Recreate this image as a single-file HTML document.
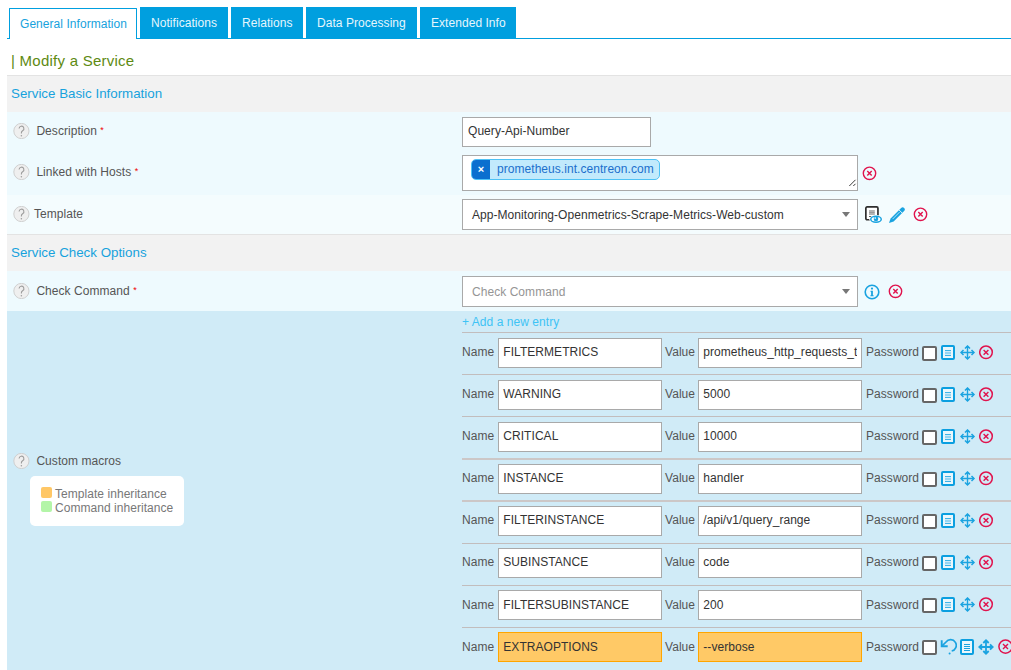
<!DOCTYPE html>
<html><head><meta charset="utf-8">
<style>
html,body{margin:0;padding:0;background:#fff;width:1011px;height:670px;overflow:hidden;}
body{font-family:"Liberation Sans",sans-serif;font-size:12px;color:#555;position:relative;letter-spacing:0.05px;}
.a{position:absolute;}
.t{position:absolute;white-space:nowrap;line-height:14px;height:14px;}
.tab{position:absolute;top:7px;height:31px;background:#009fdf;color:#e6f6fd;}
.tab span{position:absolute;top:9px;line-height:14px;white-space:nowrap;}
.hdr{position:absolute;left:7px;width:1004px;background:#f2f2f2;border-top:1px solid #e3e3e3;border-bottom:1px solid #e3e3e3;}
.hdr span{position:absolute;left:4px;font-size:13.33px;letter-spacing:0;color:#17a2dd;line-height:15px;white-space:nowrap;}
.help{position:absolute;width:15px;height:14px;border:1px solid #d2d2d2;border-radius:50%;background:#efefef;color:#a6a6a6;font-size:13px;line-height:15px;text-align:center;}
.req{color:#e00;font-size:9px;position:relative;top:-2px;}
.inp{position:absolute;background:#fff;border:1px solid #a9a9a9;box-sizing:border-box;}
.inp span{position:absolute;left:4.3px;line-height:14px;white-space:nowrap;color:#333;}
.sep{position:absolute;left:462px;width:549px;height:1px;background:#c2bdbd;}
.orange{background:#ffc966;border-color:#ffa500;}
</style></head><body>

<!-- tabs -->
<div class="a" style="left:7px;top:38px;width:1004px;height:1px;background:#009fdf"></div>
<div class="a" style="left:9px;top:8px;width:126px;height:30px;border:1px solid #009fdf;border-bottom:none;border-radius:1px 1px 0 0;background:#fff;"></div>
<div class="t" style="left:20px;top:17px;color:#17a2dd">General Information</div>
<div class="tab" style="left:140px;width:88px"><span style="left:11px">Notifications</span></div>
<div class="tab" style="left:231px;width:72px"><span style="left:11px">Relations</span></div>
<div class="tab" style="left:306px;width:111px"><span style="left:11px">Data Processing</span></div>
<div class="tab" style="left:420px;width:96px"><span style="left:11px">Extended Info</span></div>

<div class="t" style="left:11px;top:52px;font-size:15px;letter-spacing:0.25px;line-height:18px;height:18px;color:#5e8a12">| Modify a Service</div>

<!-- Section 1 -->
<div class="hdr" style="top:75px;height:36px"><span style="top:10px">Service Basic Information</span></div>
<div class="a" style="left:7px;top:112px;width:1004px;height:83px;background:#eefafe"></div>
<div class="a" style="left:7px;top:195px;width:1004px;height:39px;background:#f4fcfe"></div>

<svg class="a" style="left:13px;top:123px" width="17" height="16" viewBox="0 0 17 16"><circle cx="8.4" cy="8" r="7.6" fill="#efefef" stroke="#cfcfcf" stroke-width="1"/><path d="M6.1 5.6A2.4 2.4 0 1 1 9.6 7.7Q8.4 8.4 8.4 9.8V10.6" fill="none" stroke="#9c9c9c" stroke-width="1.1"/><circle cx="8.4" cy="12.7" r="0.75" fill="#9c9c9c"/></svg>
<div class="t" style="left:36.4px;top:124px;color:#555">Description <span class="req">*</span></div>
<div class="inp" style="left:462px;top:117px;width:189px;height:30px"><span style="top:6px;left:5px">Query-Api-Number</span></div>

<svg class="a" style="left:13px;top:164px" width="17" height="16" viewBox="0 0 17 16"><circle cx="8.4" cy="8" r="7.6" fill="#efefef" stroke="#cfcfcf" stroke-width="1"/><path d="M6.1 5.6A2.4 2.4 0 1 1 9.6 7.7Q8.4 8.4 8.4 9.8V10.6" fill="none" stroke="#9c9c9c" stroke-width="1.1"/><circle cx="8.4" cy="12.7" r="0.75" fill="#9c9c9c"/></svg>
<div class="t" style="left:36.4px;top:165px;color:#555">Linked with Hosts <span class="req">*</span></div>
<div class="inp" style="left:462px;top:155px;width:396px;height:36px"></div>
<div class="a" style="left:471px;top:159px;width:187px;height:19px;border:1px solid #4ec2f5;border-radius:5px;background:#c2eafc;overflow:hidden">
  <div class="a" style="left:0;top:0;width:18px;height:19px;background:#0b6fcf;color:#fff;font-size:11px;line-height:19px;text-align:center;font-weight:bold">×</div>
  <div class="t" style="left:25px;top:2px;color:#1b6fcc">prometheus.int.centreon.com</div>
</div>

<svg class="a" style="left:13px;top:206px" width="17" height="16" viewBox="0 0 17 16"><circle cx="8.4" cy="8" r="7.6" fill="#efefef" stroke="#cfcfcf" stroke-width="1"/><path d="M6.1 5.6A2.4 2.4 0 1 1 9.6 7.7Q8.4 8.4 8.4 9.8V10.6" fill="none" stroke="#9c9c9c" stroke-width="1.1"/><circle cx="8.4" cy="12.7" r="0.75" fill="#9c9c9c"/></svg>
<div class="t" style="left:34px;top:207px;color:#555">Template</div>
<div class="inp" style="left:462px;top:199px;width:396px;height:31px"><span style="left:9px;top:8px">App-Monitoring-Openmetrics-Scrape-Metrics-Web-custom</span></div>

<!-- Section 2 -->
<div class="hdr" style="top:234px;height:36px"><span style="top:10px">Service Check Options</span></div>
<div class="a" style="left:7px;top:271px;width:1004px;height:40px;background:#eefafe"></div>
<svg class="a" style="left:13px;top:283px" width="17" height="16" viewBox="0 0 17 16"><circle cx="8.4" cy="8" r="7.6" fill="#efefef" stroke="#cfcfcf" stroke-width="1"/><path d="M6.1 5.6A2.4 2.4 0 1 1 9.6 7.7Q8.4 8.4 8.4 9.8V10.6" fill="none" stroke="#9c9c9c" stroke-width="1.1"/><circle cx="8.4" cy="12.7" r="0.75" fill="#9c9c9c"/></svg>
<div class="t" style="left:36.4px;top:284px;color:#555">Check Command <span class="req">*</span></div>
<div class="inp" style="left:462px;top:276px;width:396px;height:31px"><span style="left:9px;top:8px;color:#959595">Check Command</span></div>

<div class="a" style="left:7px;top:311px;width:1004px;height:359px;background:#d0ebf7"></div>
<svg class="a" style="left:13px;top:453px" width="17" height="16" viewBox="0 0 17 16"><circle cx="8.4" cy="8" r="7.6" fill="#efefef" stroke="#cfcfcf" stroke-width="1"/><path d="M6.1 5.6A2.4 2.4 0 1 1 9.6 7.7Q8.4 8.4 8.4 9.8V10.6" fill="none" stroke="#9c9c9c" stroke-width="1.1"/><circle cx="8.4" cy="12.7" r="0.75" fill="#9c9c9c"/></svg>
<div class="t" style="left:36.4px;top:454px;color:#555">Custom macros</div>
<div class="a" style="left:30px;top:476px;width:154px;height:50px;background:#fff;border-radius:5px"></div>
<div class="a" style="left:41px;top:487px;width:11px;height:11px;background:#ffc766;border-radius:2px"></div>
<div class="a" style="left:41px;top:501px;width:11px;height:11px;background:#b3f5a8;border-radius:2px"></div>
<div class="t" style="left:55px;top:487px;color:#777">Template inheritance</div>
<div class="t" style="left:55px;top:501px;color:#777">Command inheritance</div>

<div class="t" style="left:462px;top:315px;color:#3ec3f5">+ Add a new entry</div>

<svg class="a" style="left:862px;top:166px" width="15" height="15" viewBox="0 0 15 15"><circle cx="7.5" cy="7.3" r="6.2" fill="none" stroke="#e0134d" stroke-width="1.4"/><path d="M5.3 5.1l4.4 4.4M9.7 5.1l-4.4 4.4" stroke="#e0134d" stroke-width="1.4"/></svg>
<svg class="a" style="left:842px;top:212px" width="8" height="5" viewBox="0 0 8 5"><path d="M0 0h8L4 5z" fill="#777"/></svg>
<svg class="a" style="left:845px;top:177px" width="12" height="12" viewBox="0 0 12 12"><path d="M4.3 9L10.5 2.8M8.3 9L10.5 6.8" stroke="#3a3a3a" stroke-width="1"/></svg>
<svg class="a" style="left:864px;top:205px" width="20" height="19" viewBox="0 0 20 19"><rect x="1.85" y="1.85" width="12.1" height="12.9" rx="1.3" fill="#fff" stroke="#2e2e2e" stroke-width="1.7"/><path d="M5 6h5.8M5 7.6h5.8M5 9.2h5.8" stroke="#9a9a9a" stroke-width="1.3"/><path d="M5 11.5h3.5" stroke="#444" stroke-width="0.9"/><ellipse cx="12" cy="14.3" rx="6.6" ry="4.3" fill="#fff"/><ellipse cx="12" cy="14.3" rx="5.25" ry="2.95" fill="#fff" stroke="#1aa3e0" stroke-width="1.5"/><circle cx="12" cy="13.9" r="2.3" fill="#1aa3e0"/><circle cx="11.2" cy="13.1" r="0.8" fill="#fff"/></svg>
<svg class="a" style="left:888px;top:207px" width="18" height="17" viewBox="0 0 18 17"><path d="M1 16L2.6 11.4L13.1 0.9A2.1 2.1 0 0 1 16.1 3.9L5.6 14.4z" fill="#1aa3e0"/><path d="M4.6 12.1L11.6 5.1" stroke="#bde5f7" stroke-width="0.9"/><path d="M11 2.9l3.1 3.1" stroke="#f5fbfe" stroke-width="0.9"/></svg>
<svg class="a" style="left:913px;top:207px" width="15" height="15" viewBox="0 0 15 15"><circle cx="7.5" cy="7.3" r="6.2" fill="none" stroke="#e0134d" stroke-width="1.4"/><path d="M5.3 5.1l4.4 4.4M9.7 5.1l-4.4 4.4" stroke="#e0134d" stroke-width="1.4"/></svg>
<svg class="a" style="left:842px;top:289px" width="8" height="5" viewBox="0 0 8 5"><path d="M0 0h8L4 5z" fill="#777"/></svg>
<svg class="a" style="left:864px;top:284px" width="16" height="16" viewBox="0 0 16 16"><circle cx="8" cy="8" r="6.8" fill="none" stroke="#1aa3e0" stroke-width="1.6"/><path d="M6.6 6.8H8.9V11.2H9.6V12.3H6.4V11.2H7.1V7.9H6.6z" fill="#1aa3e0"/><circle cx="8" cy="4.6" r="1.1" fill="#1aa3e0"/></svg>
<svg class="a" style="left:888px;top:284px" width="15" height="15" viewBox="0 0 15 15"><circle cx="7.5" cy="7.3" r="6.2" fill="none" stroke="#e0134d" stroke-width="1.4"/><path d="M5.3 5.1l4.4 4.4M9.7 5.1l-4.4 4.4" stroke="#e0134d" stroke-width="1.4"/></svg>
<div id="macros">
<div class="sep" style="top:332px"></div>
<div class="t" style="left:462px;top:345px">Name</div>
<div class="inp" style="left:498px;top:338px;width:164px;height:30px"><span style="top:6px">FILTERMETRICS</span></div>
<div class="t" style="left:665px;top:345px">Value</div>
<div class="inp" style="left:698px;top:338px;width:164px;height:30px;overflow:hidden"><span style="top:6px;width:154px;overflow:hidden">prometheus_http_requests_t</span></div>
<div class="t" style="left:866px;top:345px">Password</div>
<svg class="a" style="left:922px;top:346px" width="15" height="15" viewBox="0 0 15 15"><rect x="1" y="1" width="13" height="13" rx="1" fill="#fff" stroke="#666" stroke-width="2"/></svg>
<svg class="a" style="left:941px;top:345px" width="14" height="15" viewBox="0 0 14 15"><rect x="1" y="1" width="12" height="13" rx="1" fill="#eaf7fc" stroke="#0b9fe0" stroke-width="2"/><path d="M4 5.5h6M4 10.5h6" stroke="#3fb2e6" stroke-width="1.1"/><path d="M4 7.2h6M4 8.8h6" stroke="#7ccbef" stroke-width="1.1"/></svg>
<svg class="a" style="left:960px;top:345px" width="16" height="16" viewBox="0 0 16 16"><path d="M7.5 1.2V14M1.2 7.5H14" stroke="#1aa3e0" stroke-width="1.4" fill="none"/><path d="M5 3.5L7.5 1L10 3.5M5 11.5L7.5 14L10 11.5M3.5 5L1 7.5L3.5 10M11.5 5L14 7.5L11.5 10" stroke="#1aa3e0" stroke-width="1.5" fill="none"/></svg>
<svg class="a" style="left:979px;top:345px" width="15" height="15" viewBox="0 0 15 15"><circle cx="7" cy="7.3" r="6.3" fill="none" stroke="#e0134d" stroke-width="1.5"/><path d="M4.6 4.9l4.8 4.8M9.4 4.9l-4.8 4.8" stroke="#e0134d" stroke-width="1.4"/></svg>
<div class="sep" style="top:374px"></div>
<div class="t" style="left:462px;top:387px">Name</div>
<div class="inp" style="left:498px;top:380px;width:164px;height:30px"><span style="top:6px">WARNING</span></div>
<div class="t" style="left:665px;top:387px">Value</div>
<div class="inp" style="left:698px;top:380px;width:164px;height:30px;overflow:hidden"><span style="top:6px;width:154px;overflow:hidden">5000</span></div>
<div class="t" style="left:866px;top:387px">Password</div>
<svg class="a" style="left:922px;top:388px" width="15" height="15" viewBox="0 0 15 15"><rect x="1" y="1" width="13" height="13" rx="1" fill="#fff" stroke="#666" stroke-width="2"/></svg>
<svg class="a" style="left:941px;top:387px" width="14" height="15" viewBox="0 0 14 15"><rect x="1" y="1" width="12" height="13" rx="1" fill="#eaf7fc" stroke="#0b9fe0" stroke-width="2"/><path d="M4 5.5h6M4 10.5h6" stroke="#3fb2e6" stroke-width="1.1"/><path d="M4 7.2h6M4 8.8h6" stroke="#7ccbef" stroke-width="1.1"/></svg>
<svg class="a" style="left:960px;top:387px" width="16" height="16" viewBox="0 0 16 16"><path d="M7.5 1.2V14M1.2 7.5H14" stroke="#1aa3e0" stroke-width="1.4" fill="none"/><path d="M5 3.5L7.5 1L10 3.5M5 11.5L7.5 14L10 11.5M3.5 5L1 7.5L3.5 10M11.5 5L14 7.5L11.5 10" stroke="#1aa3e0" stroke-width="1.5" fill="none"/></svg>
<svg class="a" style="left:979px;top:387px" width="15" height="15" viewBox="0 0 15 15"><circle cx="7" cy="7.3" r="6.3" fill="none" stroke="#e0134d" stroke-width="1.5"/><path d="M4.6 4.9l4.8 4.8M9.4 4.9l-4.8 4.8" stroke="#e0134d" stroke-width="1.4"/></svg>
<div class="sep" style="top:416px"></div>
<div class="t" style="left:462px;top:429px">Name</div>
<div class="inp" style="left:498px;top:422px;width:164px;height:30px"><span style="top:6px">CRITICAL</span></div>
<div class="t" style="left:665px;top:429px">Value</div>
<div class="inp" style="left:698px;top:422px;width:164px;height:30px;overflow:hidden"><span style="top:6px;width:154px;overflow:hidden">10000</span></div>
<div class="t" style="left:866px;top:429px">Password</div>
<svg class="a" style="left:922px;top:430px" width="15" height="15" viewBox="0 0 15 15"><rect x="1" y="1" width="13" height="13" rx="1" fill="#fff" stroke="#666" stroke-width="2"/></svg>
<svg class="a" style="left:941px;top:429px" width="14" height="15" viewBox="0 0 14 15"><rect x="1" y="1" width="12" height="13" rx="1" fill="#eaf7fc" stroke="#0b9fe0" stroke-width="2"/><path d="M4 5.5h6M4 10.5h6" stroke="#3fb2e6" stroke-width="1.1"/><path d="M4 7.2h6M4 8.8h6" stroke="#7ccbef" stroke-width="1.1"/></svg>
<svg class="a" style="left:960px;top:429px" width="16" height="16" viewBox="0 0 16 16"><path d="M7.5 1.2V14M1.2 7.5H14" stroke="#1aa3e0" stroke-width="1.4" fill="none"/><path d="M5 3.5L7.5 1L10 3.5M5 11.5L7.5 14L10 11.5M3.5 5L1 7.5L3.5 10M11.5 5L14 7.5L11.5 10" stroke="#1aa3e0" stroke-width="1.5" fill="none"/></svg>
<svg class="a" style="left:979px;top:429px" width="15" height="15" viewBox="0 0 15 15"><circle cx="7" cy="7.3" r="6.3" fill="none" stroke="#e0134d" stroke-width="1.5"/><path d="M4.6 4.9l4.8 4.8M9.4 4.9l-4.8 4.8" stroke="#e0134d" stroke-width="1.4"/></svg>
<div class="sep" style="top:458px;height:2px;background:#ccc7c7"></div>
<div class="t" style="left:462px;top:471px">Name</div>
<div class="inp" style="left:498px;top:464px;width:164px;height:30px"><span style="top:6px">INSTANCE</span></div>
<div class="t" style="left:665px;top:471px">Value</div>
<div class="inp" style="left:698px;top:464px;width:164px;height:30px;overflow:hidden"><span style="top:6px;width:154px;overflow:hidden">handler</span></div>
<div class="t" style="left:866px;top:471px">Password</div>
<svg class="a" style="left:922px;top:472px" width="15" height="15" viewBox="0 0 15 15"><rect x="1" y="1" width="13" height="13" rx="1" fill="#fff" stroke="#666" stroke-width="2"/></svg>
<svg class="a" style="left:941px;top:471px" width="14" height="15" viewBox="0 0 14 15"><rect x="1" y="1" width="12" height="13" rx="1" fill="#eaf7fc" stroke="#0b9fe0" stroke-width="2"/><path d="M4 5.5h6M4 10.5h6" stroke="#3fb2e6" stroke-width="1.1"/><path d="M4 7.2h6M4 8.8h6" stroke="#7ccbef" stroke-width="1.1"/></svg>
<svg class="a" style="left:960px;top:471px" width="16" height="16" viewBox="0 0 16 16"><path d="M7.5 1.2V14M1.2 7.5H14" stroke="#1aa3e0" stroke-width="1.4" fill="none"/><path d="M5 3.5L7.5 1L10 3.5M5 11.5L7.5 14L10 11.5M3.5 5L1 7.5L3.5 10M11.5 5L14 7.5L11.5 10" stroke="#1aa3e0" stroke-width="1.5" fill="none"/></svg>
<svg class="a" style="left:979px;top:471px" width="15" height="15" viewBox="0 0 15 15"><circle cx="7" cy="7.3" r="6.3" fill="none" stroke="#e0134d" stroke-width="1.5"/><path d="M4.6 4.9l4.8 4.8M9.4 4.9l-4.8 4.8" stroke="#e0134d" stroke-width="1.4"/></svg>
<div class="sep" style="top:500px;height:2px;background:#ccc7c7"></div>
<div class="t" style="left:462px;top:513px">Name</div>
<div class="inp" style="left:498px;top:506px;width:164px;height:30px"><span style="top:6px">FILTERINSTANCE</span></div>
<div class="t" style="left:665px;top:513px">Value</div>
<div class="inp" style="left:698px;top:506px;width:164px;height:30px;overflow:hidden"><span style="top:6px;width:154px;overflow:hidden">/api/v1/query_range</span></div>
<div class="t" style="left:866px;top:513px">Password</div>
<svg class="a" style="left:922px;top:514px" width="15" height="15" viewBox="0 0 15 15"><rect x="1" y="1" width="13" height="13" rx="1" fill="#fff" stroke="#666" stroke-width="2"/></svg>
<svg class="a" style="left:941px;top:513px" width="14" height="15" viewBox="0 0 14 15"><rect x="1" y="1" width="12" height="13" rx="1" fill="#eaf7fc" stroke="#0b9fe0" stroke-width="2"/><path d="M4 5.5h6M4 10.5h6" stroke="#3fb2e6" stroke-width="1.1"/><path d="M4 7.2h6M4 8.8h6" stroke="#7ccbef" stroke-width="1.1"/></svg>
<svg class="a" style="left:960px;top:513px" width="16" height="16" viewBox="0 0 16 16"><path d="M7.5 1.2V14M1.2 7.5H14" stroke="#1aa3e0" stroke-width="1.4" fill="none"/><path d="M5 3.5L7.5 1L10 3.5M5 11.5L7.5 14L10 11.5M3.5 5L1 7.5L3.5 10M11.5 5L14 7.5L11.5 10" stroke="#1aa3e0" stroke-width="1.5" fill="none"/></svg>
<svg class="a" style="left:979px;top:513px" width="15" height="15" viewBox="0 0 15 15"><circle cx="7" cy="7.3" r="6.3" fill="none" stroke="#e0134d" stroke-width="1.5"/><path d="M4.6 4.9l4.8 4.8M9.4 4.9l-4.8 4.8" stroke="#e0134d" stroke-width="1.4"/></svg>
<div class="sep" style="top:543px"></div>
<div class="t" style="left:462px;top:555px">Name</div>
<div class="inp" style="left:498px;top:548px;width:164px;height:30px"><span style="top:6px">SUBINSTANCE</span></div>
<div class="t" style="left:665px;top:555px">Value</div>
<div class="inp" style="left:698px;top:548px;width:164px;height:30px;overflow:hidden"><span style="top:6px;width:154px;overflow:hidden">code</span></div>
<div class="t" style="left:866px;top:555px">Password</div>
<svg class="a" style="left:922px;top:556px" width="15" height="15" viewBox="0 0 15 15"><rect x="1" y="1" width="13" height="13" rx="1" fill="#fff" stroke="#666" stroke-width="2"/></svg>
<svg class="a" style="left:941px;top:555px" width="14" height="15" viewBox="0 0 14 15"><rect x="1" y="1" width="12" height="13" rx="1" fill="#eaf7fc" stroke="#0b9fe0" stroke-width="2"/><path d="M4 5.5h6M4 10.5h6" stroke="#3fb2e6" stroke-width="1.1"/><path d="M4 7.2h6M4 8.8h6" stroke="#7ccbef" stroke-width="1.1"/></svg>
<svg class="a" style="left:960px;top:555px" width="16" height="16" viewBox="0 0 16 16"><path d="M7.5 1.2V14M1.2 7.5H14" stroke="#1aa3e0" stroke-width="1.4" fill="none"/><path d="M5 3.5L7.5 1L10 3.5M5 11.5L7.5 14L10 11.5M3.5 5L1 7.5L3.5 10M11.5 5L14 7.5L11.5 10" stroke="#1aa3e0" stroke-width="1.5" fill="none"/></svg>
<svg class="a" style="left:979px;top:555px" width="15" height="15" viewBox="0 0 15 15"><circle cx="7" cy="7.3" r="6.3" fill="none" stroke="#e0134d" stroke-width="1.5"/><path d="M4.6 4.9l4.8 4.8M9.4 4.9l-4.8 4.8" stroke="#e0134d" stroke-width="1.4"/></svg>
<div class="sep" style="top:585px"></div>
<div class="t" style="left:462px;top:598px">Name</div>
<div class="inp" style="left:498px;top:590px;width:164px;height:30px"><span style="top:7px">FILTERSUBINSTANCE</span></div>
<div class="t" style="left:665px;top:598px">Value</div>
<div class="inp" style="left:698px;top:590px;width:164px;height:30px;overflow:hidden"><span style="top:7px;width:154px;overflow:hidden">200</span></div>
<div class="t" style="left:866px;top:598px">Password</div>
<svg class="a" style="left:922px;top:598px" width="15" height="15" viewBox="0 0 15 15"><rect x="1" y="1" width="13" height="13" rx="1" fill="#fff" stroke="#666" stroke-width="2"/></svg>
<svg class="a" style="left:941px;top:597px" width="14" height="15" viewBox="0 0 14 15"><rect x="1" y="1" width="12" height="13" rx="1" fill="#eaf7fc" stroke="#0b9fe0" stroke-width="2"/><path d="M4 5.5h6M4 10.5h6" stroke="#3fb2e6" stroke-width="1.1"/><path d="M4 7.2h6M4 8.8h6" stroke="#7ccbef" stroke-width="1.1"/></svg>
<svg class="a" style="left:960px;top:597px" width="16" height="16" viewBox="0 0 16 16"><path d="M7.5 1.2V14M1.2 7.5H14" stroke="#1aa3e0" stroke-width="1.4" fill="none"/><path d="M5 3.5L7.5 1L10 3.5M5 11.5L7.5 14L10 11.5M3.5 5L1 7.5L3.5 10M11.5 5L14 7.5L11.5 10" stroke="#1aa3e0" stroke-width="1.5" fill="none"/></svg>
<svg class="a" style="left:979px;top:597px" width="15" height="15" viewBox="0 0 15 15"><circle cx="7" cy="7.3" r="6.3" fill="none" stroke="#e0134d" stroke-width="1.5"/><path d="M4.6 4.9l4.8 4.8M9.4 4.9l-4.8 4.8" stroke="#e0134d" stroke-width="1.4"/></svg>
<div class="sep" style="top:627px"></div>
<div class="t" style="left:462px;top:640px">Name</div>
<div class="inp orange" style="left:498px;top:632px;width:164px;height:30px"><span style="top:7px">EXTRAOPTIONS</span></div>
<div class="t" style="left:665px;top:640px">Value</div>
<div class="inp orange" style="left:698px;top:632px;width:164px;height:30px;overflow:hidden"><span style="top:7px;width:154px;overflow:hidden">--verbose</span></div>
<div class="t" style="left:866px;top:640px">Password</div>
<svg class="a" style="left:922px;top:640px" width="15" height="15" viewBox="0 0 15 15"><rect x="1" y="1" width="13" height="13" rx="1" fill="#fff" stroke="#666" stroke-width="2"/></svg>
<svg class="a" style="left:940px;top:638px" width="17" height="17" viewBox="0 0 17 17"><path d="M1.8 8.2L6 4A5.7 5.7 0 1 1 11.7 13" fill="none" stroke="#1aa3e0" stroke-width="1.7"/><path d="M1.7 2.3V8.3H7.7" fill="none" stroke="#1aa3e0" stroke-width="1.9"/><circle cx="9.6" cy="15.6" r="1" fill="#1aa3e0"/></svg>
<svg class="a" style="left:960px;top:639px" width="14" height="16" viewBox="0 0 14 16"><rect x="1" y="1" width="12" height="14" rx="1" fill="#eaf7fc" stroke="#0b9fe0" stroke-width="2"/><path d="M4 5.5h6M4 7.5h6M4 9.5h6M4 11.5h6" stroke="#1aa3e0" stroke-width="1"/></svg>
<svg class="a" style="left:978px;top:639px" width="17" height="17" viewBox="0 0 17 17"><path d="M8 1.5V15M1.5 8H15" stroke="#1aa3e0" stroke-width="1.8" fill="none"/><path d="M5.3 4L8 1.3L10.7 4M5.3 12L8 14.7L10.7 12M4 5.3L1.3 8L4 10.7M12 5.3L14.7 8L12 10.7" stroke="#1aa3e0" stroke-width="1.8" fill="none"/></svg>
<svg class="a" style="left:998px;top:639px" width="16" height="16" viewBox="0 0 16 16"><circle cx="7.5" cy="7.6" r="6.6" fill="none" stroke="#e0134d" stroke-width="1.5"/><path d="M5 5.1l5 5M10 5.1l-5 5" stroke="#e0134d" stroke-width="1.4"/></svg>
</div>
</body></html>
